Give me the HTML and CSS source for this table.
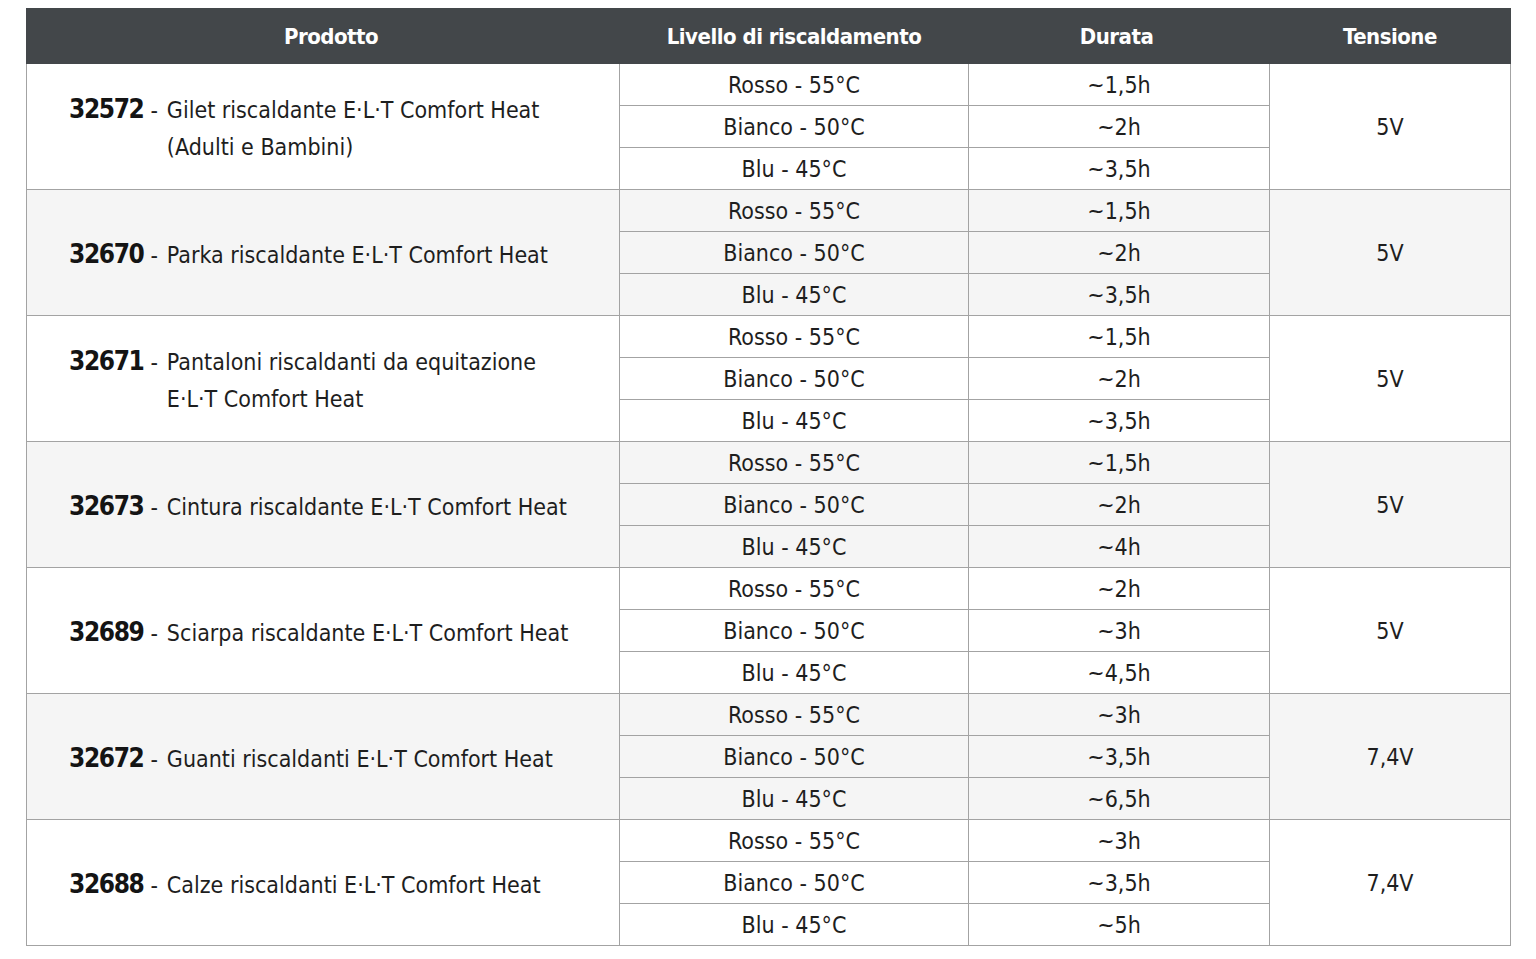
FILE: index.html
```html
<!DOCTYPE html>
<html lang="it">
<head>
<meta charset="utf-8">
<title>E·L·T Comfort Heat</title>
<link rel="stylesheet" href="styles.css">
</head>
<body>
<div class="wrap">
<table class="spec">
<colgroup>
<col class="c1"><col class="c2"><col class="c3"><col class="c4">
</colgroup>
<thead>
<tr><th class="h1">Prodotto</th><th>Livello di riscaldamento</th><th class="h3">Durata</th><th>Tensione</th></tr>
</thead>
<tbody>
<tr class="g w"><td rowspan="3" class="p"><div class="prod"><span class="code">32572</span><span class="sep">-</span><span class="desc">Gilet riscaldante E·L·T Comfort Heat<br>(Adulti e Bambini)</span></div></td><td>Rosso - 55°C</td><td>~1,5h</td><td rowspan="3">5V</td></tr>
<tr class="w"><td>Bianco - 50°C</td><td>~2h</td></tr>
<tr class="w"><td>Blu - 45°C</td><td>~3,5h</td></tr>

<tr class="g a"><td rowspan="3" class="p"><div class="prod"><span class="code">32670</span><span class="sep">-</span><span class="desc">Parka riscaldante E·L·T Comfort Heat</span></div></td><td>Rosso - 55°C</td><td>~1,5h</td><td rowspan="3">5V</td></tr>
<tr class="a"><td>Bianco - 50°C</td><td>~2h</td></tr>
<tr class="a"><td>Blu - 45°C</td><td>~3,5h</td></tr>

<tr class="g w"><td rowspan="3" class="p"><div class="prod"><span class="code">32671</span><span class="sep">-</span><span class="desc">Pantaloni riscaldanti da equitazione<br>E·L·T Comfort Heat</span></div></td><td>Rosso - 55°C</td><td>~1,5h</td><td rowspan="3">5V</td></tr>
<tr class="w"><td>Bianco - 50°C</td><td>~2h</td></tr>
<tr class="w"><td>Blu - 45°C</td><td>~3,5h</td></tr>

<tr class="g a"><td rowspan="3" class="p"><div class="prod"><span class="code">32673</span><span class="sep">-</span><span class="desc">Cintura riscaldante E·L·T Comfort Heat</span></div></td><td>Rosso - 55°C</td><td>~1,5h</td><td rowspan="3">5V</td></tr>
<tr class="a"><td>Bianco - 50°C</td><td>~2h</td></tr>
<tr class="a"><td>Blu - 45°C</td><td>~4h</td></tr>

<tr class="g w"><td rowspan="3" class="p"><div class="prod"><span class="code">32689</span><span class="sep">-</span><span class="desc">Sciarpa riscaldante E·L·T Comfort Heat</span></div></td><td>Rosso - 55°C</td><td>~2h</td><td rowspan="3">5V</td></tr>
<tr class="w"><td>Bianco - 50°C</td><td>~3h</td></tr>
<tr class="w"><td>Blu - 45°C</td><td>~4,5h</td></tr>

<tr class="g a"><td rowspan="3" class="p"><div class="prod"><span class="code">32672</span><span class="sep">-</span><span class="desc">Guanti riscaldanti E·L·T Comfort Heat</span></div></td><td>Rosso - 55°C</td><td>~3h</td><td rowspan="3">7,4V</td></tr>
<tr class="a"><td>Bianco - 50°C</td><td>~3,5h</td></tr>
<tr class="a"><td>Blu - 45°C</td><td>~6,5h</td></tr>

<tr class="g w"><td rowspan="3" class="p"><div class="prod"><span class="code">32688</span><span class="sep">-</span><span class="desc">Calze riscaldanti E·L·T Comfort Heat</span></div></td><td>Rosso - 55°C</td><td>~3h</td><td rowspan="3">7,4V</td></tr>
<tr class="w"><td>Bianco - 50°C</td><td>~3,5h</td></tr>
<tr class="w"><td>Blu - 45°C</td><td>~5h</td></tr>
</tbody>
</table>
</div>
</body>
</html>
```
FILE: styles.css
```css
html, body {
  margin: 0;
  padding: 0;
  background: #ffffff;
}
.wrap {
  padding: 8px 26px 0 26px;
}
.spec {
  width: 1484px;
  table-layout: fixed;
  border-collapse: collapse;
  font-family: "DejaVu Sans Condensed", "Liberation Sans", sans-serif;
  color: #1e1e1e;
  font-size: 23px;
}
.c1 { width: 593px; }
.c2 { width: 349px; }
.c3 { width: 301px; }
.c4 { width: 241px; }
.spec th {
  background: #43474a;
  color: #ffffff;
  font-weight: bold;
  font-size: 22px;
  letter-spacing: -0.5px;
  height: 54px;
  padding: 0;
  text-align: center;
  vertical-align: middle;
  border: 1px solid #43474a;
  border-left: 1px solid #5a5d60;
}
.spec th.h1 {
  border-left-color: #43474a;
  padding-left: 16px;
}
.spec th.h3 {
  padding-right: 5px;
}
.spec td {
  height: 40px;
  padding: 1px 0 0 0;
  text-align: center;
  vertical-align: middle;
  border: 1px solid #a3a3a3;
  line-height: 40px;
}
.spec tr.w td { background: #ffffff; }
.spec tr.a td { background: #f5f5f5; }
.spec tr.g td { border-top: 1px solid #999999; }
.spec td.p {
  text-align: left;
  line-height: 37px;
  white-space: nowrap;
}
.prod {
  display: flex;
  align-items: baseline;
  padding-left: 42px;
  padding-top: 3px;
}
.code {
  font-weight: bold;
  font-size: 26px;
  letter-spacing: -1.4px;
  color: #141414;
}
.sep {
  margin: 0 9px 0 7px;
}
.desc {
  display: block;
}
```
